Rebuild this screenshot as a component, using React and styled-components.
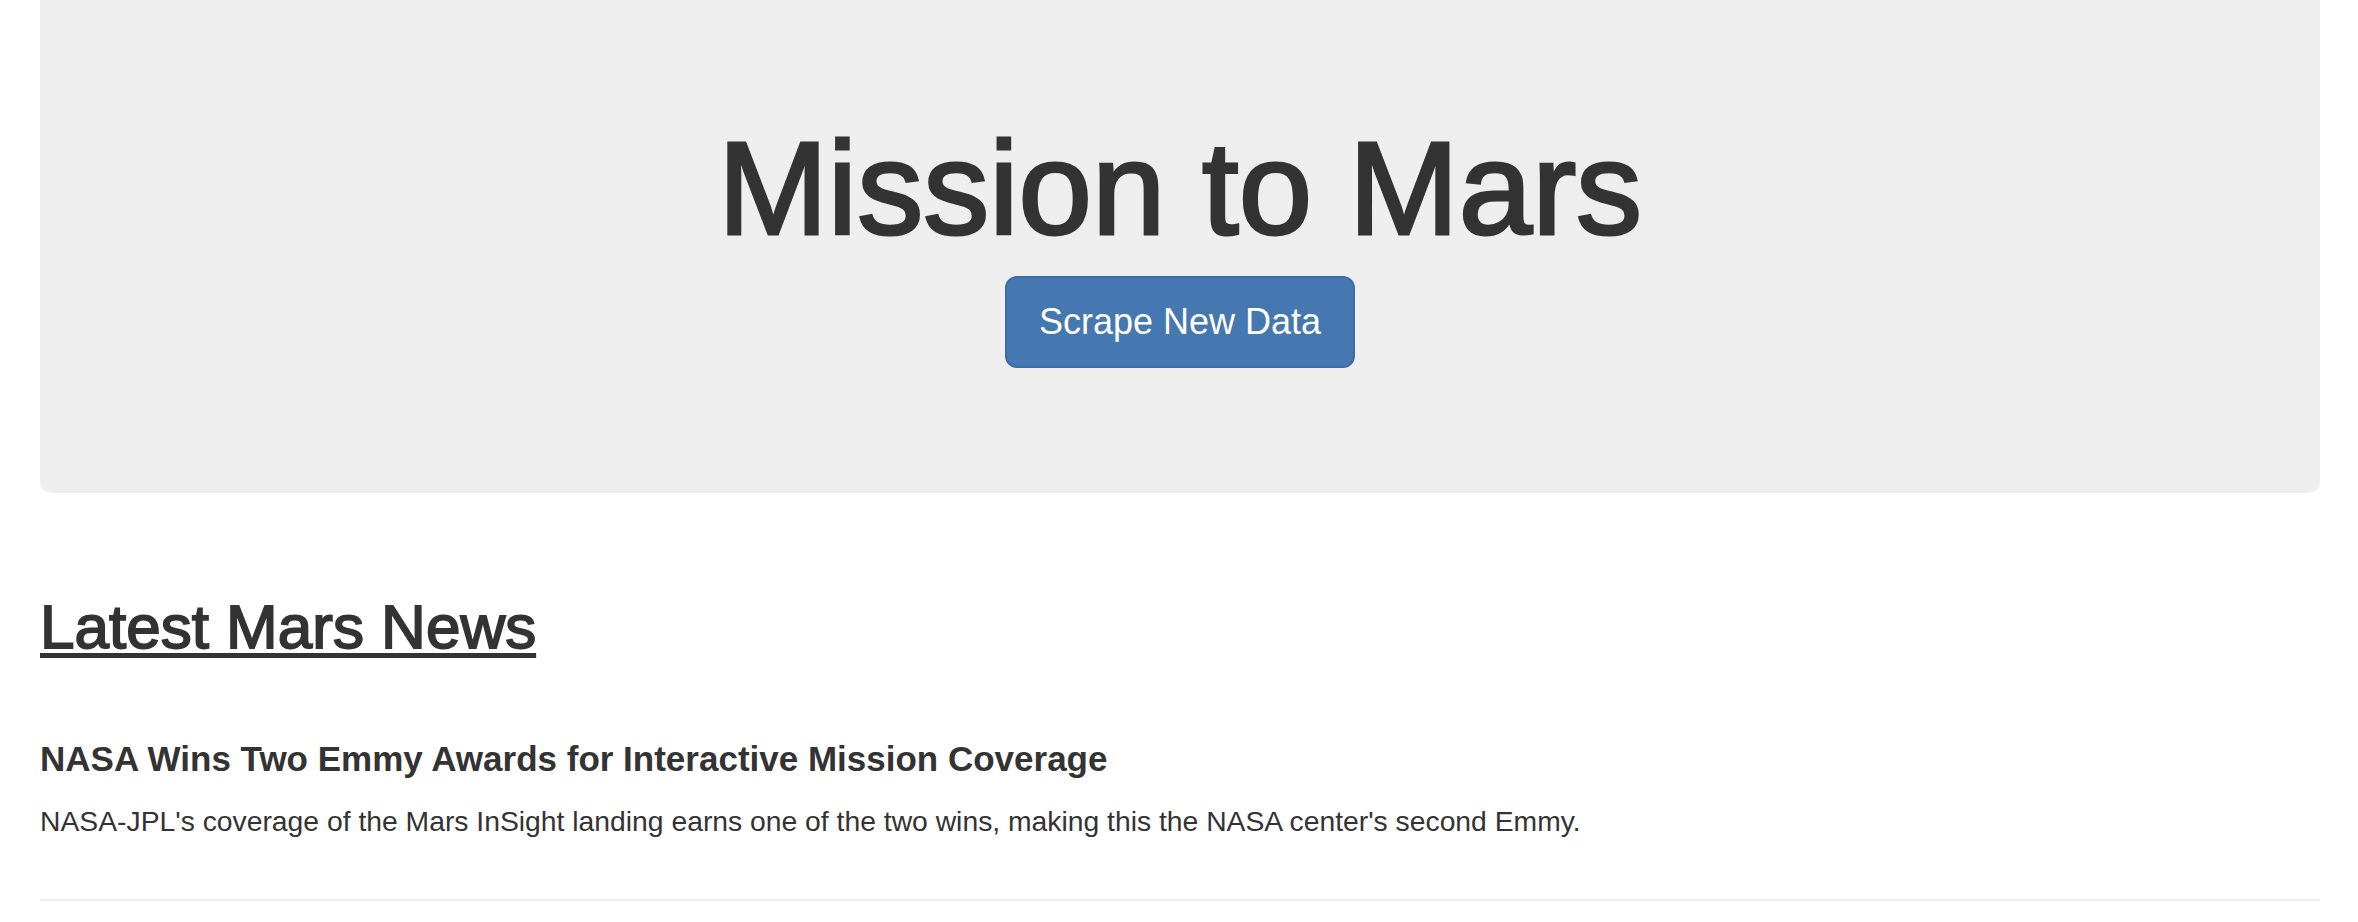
import React from 'react'
import styled, {createGlobalStyle} from 'styled-components'

const GlobalStyle = createGlobalStyle`
  body {
    margin: 0;
    background: #fff;
    color: #333;
    font-family: "Liberation Sans", Arial, Helvetica, sans-serif;
  }
`;

const news = {
    title: 'NASA Wins Two Emmy Awards for Interactive Mission Coverage',
    paragraph: "NASA-JPL's coverage of the Mars InSight landing earns one of the two wins, making this the NASA center's second Emmy."
}

function App() {
    return (
        <>
        <GlobalStyle/>
        <Page>
            <Jumbotron>
                <Title>Mission to Mars</Title>
                <ScrapeButton href="#">Scrape New Data</ScrapeButton>
            </Jumbotron>

            <Section>
                <SectionTitle>Latest Mars News</SectionTitle>
                <NewsTitle>{news.title}</NewsTitle>
                <NewsText>{news.paragraph}</NewsText>
                <Divider/>
            </Section>
        </Page>
        </>
    )
}

const Page = styled.div`
    padding: 0 38px 0 40px;
`;

const Jumbotron = styled.div`
    display: flex;
    flex-direction: column;
    align-items: center;
    background-color: #eee;
    border-radius: 0 0 12px 12px;
    padding: 117px 0 125px;
`;

const Title = styled.h1`
    margin: 0;
    font-size: 132px;
    line-height: 143px;
    font-weight: 400;
    color: #333;
    -webkit-text-stroke: 3px #333;
`;

const ScrapeButton = styled.a`
    display: inline-block;
    margin-top: 16px;
    padding: 20px 32px;
    font-size: 36px;
    line-height: 48px;
    color: #fff;
    text-decoration: none;
    background-color: #4577b1;
    border: 2px solid #3b6ca6;
    border-radius: 12px;
`;

const Section = styled.div`
    display: flex;
    flex-direction: column;
    align-items: flex-start;
`;

const SectionTitle = styled.h2`
    margin: 100px 0 0;
    font-size: 62px;
    line-height: 1.1;
    font-weight: 400;
    -webkit-text-stroke: 1.8px #333;
    text-decoration: underline;
    text-decoration-thickness: 5px;
    text-underline-offset: 5px;
`;

const NewsTitle = styled.h4`
    margin: 79px 0 0;
    font-size: 35px;
    line-height: 1.1;
    font-weight: 700;
`;

const NewsText = styled.p`
    margin: 22px 0 0;
    font-size: 28.3px;
    line-height: 40px;
`;

const Divider = styled.hr`
    align-self: stretch;
    margin: 58px 0 0;
    border: 0;
    height: 2px;
    background-color: #eee;
`;

export default App
